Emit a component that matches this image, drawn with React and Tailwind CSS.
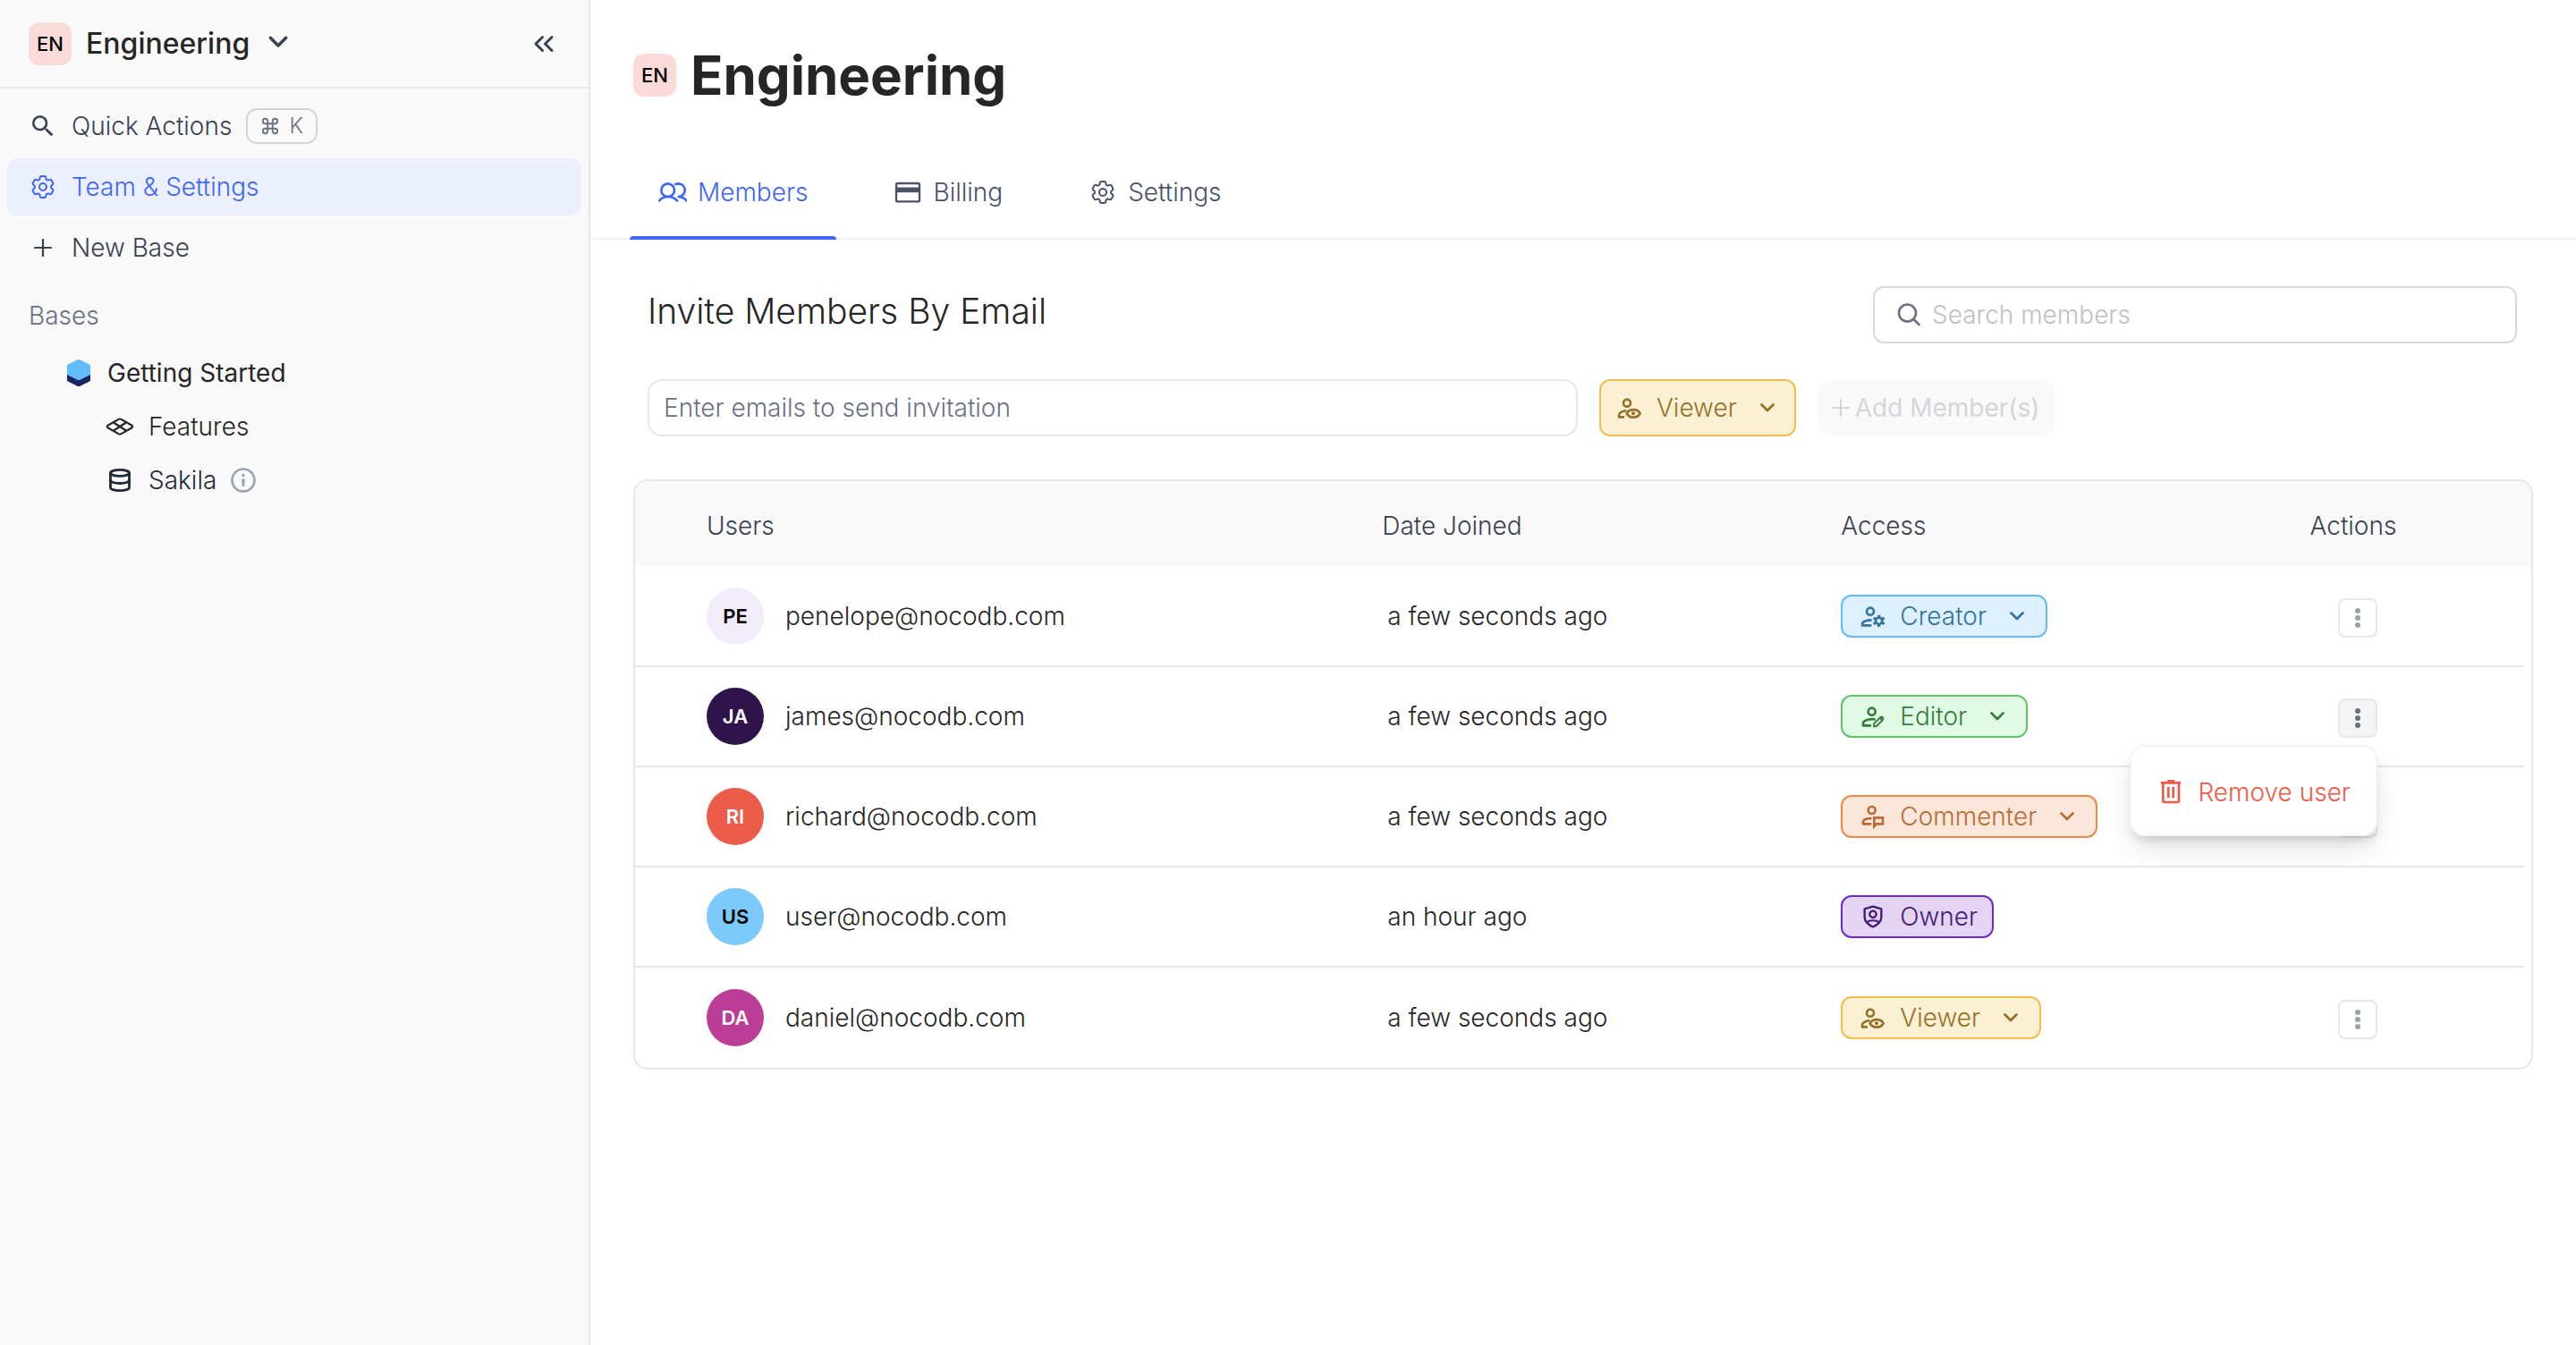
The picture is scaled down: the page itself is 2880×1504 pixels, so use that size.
import { ChevronsLeft, Command, Database } from "lucide-react";
import { HiOutlineCog6Tooth } from "react-icons/hi2";
import { MdSearch } from "react-icons/md";

function Drawing({ box = 84, stroke = 8, className = "size-7 shrink-0", children }) {
  return (
    <svg
      viewBox={`0 0 ${box} ${box}`}
      fill="none"
      stroke="currentColor"
      strokeWidth={stroke}
      strokeLinecap="round"
      strokeLinejoin="round"
      className={className}
      aria-hidden="true"
    >
      {children}
    </svg>
  );
}

const CreatorIcon = () => (
  <Drawing>
    <circle cx="33" cy="26" r="12" />
    <path d="M38 55C22 55 6 60 6 68v5h31" strokeLinecap="butt" />
    <circle cx="62" cy="58" r="11" />
    <path
      d="M62 46v-8M62 70v8M51 52l-7-4M73 52l7-4M51 64l-7 4M73 64l7 4"
      strokeLinecap="butt"
      strokeWidth="9"
    />
  </Drawing>
);

const EditorIcon = () => (
  <Drawing>
    <circle cx="38" cy="26" r="12" />
    <path d="M50 52C30 50 9 55 9 66v7h27" strokeLinecap="butt" />
    <path d="M45 76l1-10 20-20c3-3 7-3 9 0s2 6-1 9L54 75z" strokeWidth="6" />
    <path d="M64 50l8-6 4 4-6 8z" fill="currentColor" stroke="none" />
  </Drawing>
);

const CommenterIcon = () => (
  <Drawing>
    <circle cx="38" cy="21" r="12" />
    <path d="M38 48C24 48 9 52 9 60v7h28" strokeLinecap="butt" />
    <path d="M46 46h29v21H53l-7 8z" strokeLinejoin="miter" />
  </Drawing>
);

const OwnerIcon = () => (
  <Drawing stroke={7}>
    <path d="M42 8l28 8v29c0 13-14 26-28 31-14-5-28-18-28-31V16z" />
    <circle cx="42" cy="34" r="11" />
    <path d="M21 61c9-8 33-8 42 0" strokeWidth="6" />
  </Drawing>
);

const ViewerIcon = () => (
  <Drawing>
    <circle cx="33" cy="26" r="12" />
    <path d="M31 51C20 53 6 59 6 67v6h18" strokeLinecap="butt" />
    <path d="M32 61c8-17 37-17 45 0-8 17-37 17-45 0z" />
    <circle cx="54" cy="61" r="6" fill="currentColor" stroke="none" />
  </Drawing>
);

const TrashIcon = () => (
  <Drawing>
    <path d="M8 10h67M31 4h23" strokeLinecap="butt" />
    <path d="M16 11v61q0 3 3 3h47q3 0 3-3V11" />
    <path d="M34 23v38M50 23v38" strokeLinecap="butt" />
  </Drawing>
);

const MembersIcon = () => (
  <Drawing box={96} className="size-8 shrink-0">
    <circle cx="32" cy="41" r="22" />
    <path d="M4 76c6-9 16-13 28-13s24 4 31 13" />
    <path d="M58 21a22 22 0 1 1 10 42c11 1 20 5 27 13" />
  </Drawing>
);

const BillingIcon = () => (
  <Drawing box={96} stroke={7} className="size-8 shrink-0">
    <rect x="9" y="18" width="78" height="61" rx="5" />
    <path d="M9 40h78" strokeWidth="17" strokeLinecap="butt" />
  </Drawing>
);

const ChevronDown = ({ className = "size-6 shrink-0", stroke = 2.8 }) => (
  <Drawing box={24} stroke={stroke} className={className}>
    <path d="M5.500 8.500l6.500 6.500 6.500-6.500" />
  </Drawing>
);

const PlusIcon = ({ className }) => (
  <Drawing box={20} stroke={2.2} className={className}>
    <path d="M10 1v18M1 10h18" />
  </Drawing>
);

const SearchIcon = () => (
  <Drawing box={28} stroke={2.6} className="size-7 shrink-0 text-[#6a7184]">
    <circle cx="12.500" cy="12" r="9.500" />
    <path d="M19.500 19l6 6" />
  </Drawing>
);

const DotsIcon = () => (
  <svg viewBox="0 0 24 24" fill="currentColor" className="size-6" aria-hidden="true">
    <circle cx="12" cy="4" r="3" />
    <circle cx="12" cy="12" r="3" />
    <circle cx="12" cy="20" r="3" />
  </svg>
);

const BaseLogo = () => (
  <svg viewBox="0 0 28 32" className="h-8 w-7" aria-hidden="true">
    <path d="M1 12h26v12q0 1-1 1.600L16 30.500q-2 1-4 0L2 25.600Q1 25 1 24z" fill="#1b2560" />
    <path
      d="M12 1.500q2-1 4 0l10 5q1 .5 1 1.500v9q0 1-1 1.500l-10 5q-2 1-4 0l-10-5q-1-.5-1-1.500V8q0-1 1-1.500z"
      fill="#62bbfb"
    />
  </svg>
);

const GridIcon = () => (
  <svg
    viewBox="0 0 32 20"
    fill="none"
    stroke="currentColor"
    strokeWidth="2.200"
    strokeLinejoin="round"
    className="h-5 w-8"
    aria-hidden="true"
  >
    <path d="M14.500 1.900q1.500-.8 3 0l12 6.900q1.500 1.200 0 2.400l-12 6.900q-1.500.8-3 0l-12-6.900q-1.500-1.200 0-2.400z" />
    <path d="M9 5.500l14 9M23 5.500l-14 9" />
  </svg>
);

const InfoIcon = () => (
  <Drawing box={28} stroke={2.6} className="size-7 shrink-0">
    <circle cx="14" cy="14" r="12.500" />
    <path d="M14 13.500v6" strokeWidth="3" />
    <circle cx="14" cy="8.500" r="1.700" fill="currentColor" stroke="none" />
  </Drawing>
);

const roles = {
  Creator: { Icon: CreatorIcon, tone: "border-[#62b9fb] bg-[#dcf0ff] text-[#36729b]" },
  Editor: { Icon: EditorIcon, tone: "border-[#5ec466] bg-[#e1fae6] text-[#367d3f]" },
  Commenter: { Icon: CommenterIcon, tone: "border-[#ea8947] bg-[#fbe7d9] text-[#b96b35]" },
  Owner: { Icon: OwnerIcon, tone: "border-[#7129cb] bg-[#e3d4f3] text-[#441a79]" },
  Viewer: { Icon: ViewerIcon, tone: "border-[#f5bd4b] bg-[#fcf0d4] text-[#937228]" },
};
const assignable = ["Creator", "Editor", "Commenter", "Viewer"];

function RoleSelect({ role, label, className }) {
  const { Icon, tone } = roles[role];
  return (
    <div className={`inline-flex items-center gap-4 rounded-xl border-2 ${tone} ${className}`}>
      <Icon />
      <select
        aria-label={label}
        defaultValue={role}
        className="field-sizing-content cursor-pointer appearance-none bg-transparent leading-9 outline-none"
      >
        {assignable.map((name) => (
          <option key={name}>{name}</option>
        ))}
      </select>
      <span className="pointer-events-none ml-1.5">
        <ChevronDown />
      </span>
    </div>
  );
}

function RoleBadge({ role }) {
  const { Icon, tone } = roles[role];
  return (
    <span className={`inline-flex h-12 items-center gap-4 rounded-xl border-2 pr-4 pl-5 ${tone}`}>
      <Icon />
      {role}
    </span>
  );
}

const members = [
  { initials: "PE", email: "penelope@nocodb.com", joined: "a few seconds ago", role: "Creator", avatar: "bg-[#f2ebf9] text-black" },
  { initials: "JA", email: "james@nocodb.com", joined: "a few seconds ago", role: "Editor", avatar: "bg-[#2f144b] text-white", open: true },
  { initials: "RI", email: "richard@nocodb.com", joined: "a few seconds ago", role: "Commenter", avatar: "bg-[#ed5b4b] text-white" },
  { initials: "US", email: "user@nocodb.com", joined: "an hour ago", role: "Owner", avatar: "bg-[#7bcafb] text-black" },
  { initials: "DA", email: "daniel@nocodb.com", joined: "a few seconds ago", role: "Viewer", avatar: "bg-[#bb3d98] text-white" },
];

function MemberActions({ open, email }) {
  return (
    <div className="relative inline-flex">
      <button
        type="button"
        aria-label={`Actions for ${email}`}
        aria-expanded={Boolean(open)}
        className={`flex size-11 items-center justify-center rounded-lg border-2 border-[#e7e7e9] ${
          open ? "bg-[#f4f4f5] text-[#6a7184]" : "bg-white text-[#9aa2b1]"
        }`}
      >
        <DotsIcon />
      </button>
      {open && (
        <div
          role="menu"
          className="absolute top-[52px] right-0 z-10 rounded-2xl border-2 border-[#f4f4f5] bg-white shadow-[0_16px_32px_-4px_rgba(0,0,0,0.12),0_8px_12px_-4px_rgba(0,0,0,0.14)]"
        >
          <button
            type="button"
            role="menuitem"
            className="flex h-[98px] items-center gap-4 pt-1 pr-7 pl-[30px] whitespace-nowrap text-[#ef5b4a]"
          >
            <TrashIcon />
            Remove user
          </button>
        </div>
      )}
    </div>
  );
}

function MembersTable() {
  return (
    <div className="overflow-hidden rounded-2xl border-2 border-[#e7e7e9]">
      <table className="w-full table-fixed border-separate border-spacing-0 text-left">
        <colgroup>
          <col className="w-[39.400%]" />
          <col className="w-[24.200%]" />
          <col className="w-[18%]" />
          <col />
          <col className="w-2" />
        </colgroup>
        <thead className="bg-[#f9f9fa] text-[#374151]">
          <tr className="h-24">
            <th scope="col" className="pt-1 pl-20 font-light">Users</th>
            <th scope="col" className="pt-1 font-light">Date Joined</th>
            <th scope="col" className="pt-1 font-light">Access</th>
            <th scope="col" className="pt-1 text-center font-light">Actions</th>
            <td />
          </tr>
        </thead>
        <tbody className="text-[#262626] [&>tr:not(:last-child)>td:not(:last-child)]:border-b-2">
          {members.map((m) => (
            <tr key={m.email} className="h-28">
              <td className="border-[#e7e7e9] pl-20">
                <div className="flex items-center gap-6">
                  <span
                    className={`flex size-16 items-center justify-center rounded-full text-[22px] font-semibold ${m.avatar}`}
                  >
                    {m.initials}
                  </span>
                  {m.email}
                </div>
              </td>
              <td className="border-[#e7e7e9] pl-1.5">{m.joined}</td>
              <td className="border-[#e7e7e9]">
                <div className="flex">
                  {m.role === "Owner" ? (
                    <RoleBadge role="Owner" />
                  ) : (
                    <RoleSelect role={m.role} label={`Access of ${m.email}`} className="h-12 px-5" />
                  )}
                </div>
              </td>
              <td className="border-[#e7e7e9] pl-2.5 text-center">
                {m.role !== "Owner" && (
                  <div className="flex justify-center pt-1">
                    <MemberActions open={m.open} email={m.email} />
                  </div>
                )}
              </td>
              <td />
            </tr>
          ))}
        </tbody>
      </table>
    </div>
  );
}

function Sidebar() {
  return (
    <aside className="w-[660px] shrink-0 border-r-2 border-[#e7e7e9] bg-[#f9f9fa]">
      <header className="flex h-[99px] items-center border-b-2 border-[#e7e7e9] px-8">
        <button type="button" className="flex items-center text-[32px] font-medium text-[#262626]">
          <span className="mr-4 flex size-12 items-center justify-center rounded-xl bg-[#fadbd9] text-[22px] font-medium text-black">
            EN
          </span>
          Engineering
          <ChevronDown className="mb-1 ml-4 size-8 text-[#374151]" stroke={2.6} />
        </button>
        <button type="button" aria-label="Collapse sidebar" className="ml-auto text-[#374151]">
          <ChevronsLeft className="size-9" strokeWidth={2} />
        </button>
      </header>

      <nav className="flex flex-col gap-1 px-2 pt-2.5 text-[#374151]">
        <button type="button" className="flex h-16 items-center rounded-xl px-6">
          <MdSearch className="mr-4 size-8" />
          Quick Actions
          <kbd className="ml-4 flex h-10 items-center gap-2.5 rounded-xl border-2 border-[#d5d5d9] px-3.5 font-[Inter] text-2xl text-[#6a7184]">
            <Command className="size-[22px]" strokeWidth={2} />
            K
          </kbd>
        </button>
        <button
          type="button"
          aria-current="page"
          className="flex h-16 items-center rounded-xl bg-[#ebeffe] px-6 text-[#3f66f5]"
        >
          <HiOutlineCog6Tooth className="mr-4 size-8" />
          Team &amp; Settings
        </button>
        <button type="button" className="flex h-16 items-center rounded-xl px-6">
          <span className="mr-4 flex size-8 items-center justify-center">
            <PlusIcon className="size-5" />
          </span>
          New Base
        </button>
      </nav>

      <h2 className="mt-3 mb-0.5 flex h-16 items-center px-8 text-[#6a7184]">Bases</h2>
      <ul className="text-[#262626]">
        <li>
          <a href="#getting-started" className="flex h-[60px] items-center gap-[18px] pl-[74px] font-normal">
            <BaseLogo />
            Getting Started
          </a>
          <ul>
            <li>
              <a href="#features" className="flex h-[60px] items-center gap-4 pl-[118px]">
                <GridIcon />
                Features
              </a>
            </li>
            <li className="flex h-[60px] items-center gap-4 text-[#1f293a]">
              <a href="#sakila" className="flex items-center gap-4 pl-[118px]">
                <span className="flex w-8 justify-center">
                  <Database className="size-7" strokeWidth={2.4} />
                </span>
                Sakila
              </a>
              <button type="button" aria-label="About Sakila" className="text-[#9aa2b1]">
                <InfoIcon />
              </button>
            </li>
          </ul>
        </li>
      </ul>
    </aside>
  );
}

const tabs = [
  { name: "Members", Icon: MembersIcon, active: true },
  { name: "Billing", Icon: BillingIcon },
  { name: "Settings", Icon: () => <HiOutlineCog6Tooth className="size-8" /> },
];

export default function App() {
  return (
    <div className="flex min-h-screen bg-white font-[Inter,sans-serif] text-[28px] leading-9 font-light">
      <Sidebar />
      <main className="min-w-0 flex-1">
        <div className="flex items-center gap-4 px-12 pt-12">
          <span className="flex size-12 items-center justify-center rounded-xl bg-[#fadbd9] text-[22px] font-medium text-black">
            EN
          </span>
          <h1 className="text-[60px] leading-[72px] font-bold text-[#262626]">Engineering</h1>
        </div>

        <div role="tablist" className="mt-10 flex gap-8 border-b-2 border-[#f0f0f0] px-11">
          {tabs.map(({ name, Icon, active }) => (
            <button
              key={name}
              type="button"
              role="tab"
              aria-selected={Boolean(active)}
              className={`relative flex h-[106px] items-center gap-3 px-8 pt-1 ${
                active ? "text-[#3f66f5]" : "text-[#4a5268]"
              }`}
            >
              <Icon />
              {name}
              {active && (
                <span className="absolute inset-x-0 -bottom-0.5 h-1 rounded-t-sm bg-[#3f66f5]" />
              )}
            </button>
          ))}
        </div>

        <div className="px-12 pt-[52px]">
          <div className="flex items-start justify-between gap-8 pr-[18px] pl-4">
            <h2 className="text-[39px] leading-[56px] text-[#262626]">Invite Members By Email</h2>
            <label className="flex h-16 w-[720px] items-center rounded-xl border-2 border-[#d9d9d9] px-6">
              <SearchIcon />
              <input
                type="search"
                aria-label="Search members"
                placeholder="Search members"
                className="ml-3 min-w-0 flex-1 bg-transparent outline-none placeholder:text-[#bfbfbf]"
              />
            </label>
          </div>

          <form className="mt-10 flex gap-6 pl-4">
            <input
              type="text"
              aria-label="Emails to invite"
              placeholder="Enter emails to send invitation"
              className="h-16 w-[1040px] min-w-0 rounded-2xl border-2 border-[#e7e7e9] px-4 outline-none placeholder:text-[#6a7184]"
            />
            <RoleSelect role="Viewer" label="Role of the invited members" className="h-16 px-[18px]" />
            <button
              type="button"
              disabled
              className="flex h-16 items-center gap-1.5 rounded-2xl bg-[#f9f9fa] px-4 font-normal whitespace-nowrap text-[#d5d5d9]"
            >
              <PlusIcon className="size-5" />
              Add Member(s)
            </button>
          </form>

          <div className="mt-12">
            <MembersTable />
          </div>
        </div>
      </main>
    </div>
  );
}
